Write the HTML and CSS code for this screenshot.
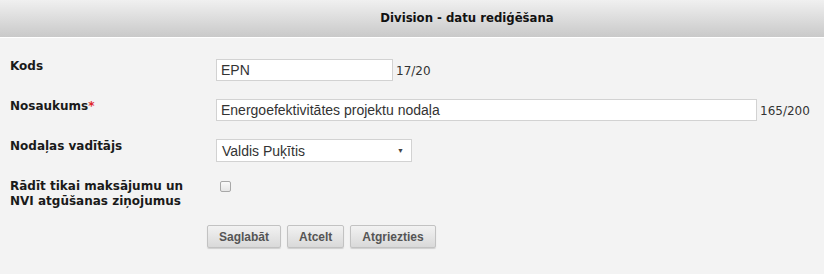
FILE: index.html
```html
<!DOCTYPE html>
<html lang="lv">
<head>
    <meta charset="UTF-8">
    <title>Division - datu rediģēšana</title>
    <link rel="stylesheet" href="styles.css">
</head>
<body>
    <div class="header">
        <h1>Division - datu rediģēšana</h1>
    </div>

    <form class="edit-form">
        <div class="form-row">
            <label class="form-label" for="kods">Kods</label>
            <div class="form-field">
                <input type="text" id="kods" class="text-input short" value="EPN">
                <span class="counter">17/20</span>
            </div>
        </div>
        <div class="form-row">
            <label class="form-label" for="nosaukums">Nosaukums<span class="required">*</span></label>
            <div class="form-field">
                <input type="text" id="nosaukums" class="text-input long" value="Energoefektivitātes projektu nodaļa">
                <span class="counter">165/200</span>
            </div>
        </div>
        <div class="form-row">
            <label class="form-label" for="vaditajs">Nodaļas vadītājs</label>
            <div class="form-field">
                <div class="select-box" id="vaditajs">
                    <span>Valdis Puķītis</span>
                    <span class="arrow">&#9660;</span>
                </div>
            </div>
        </div>
        <div class="form-row">
            <label class="form-label" for="tikai">Rādīt tikai maksājumu un NVI atgūšanas ziņojumus</label>
            <div class="form-field">
                <span class="checkbox" id="tikai"></span>
            </div>
        </div>
        <div class="buttons">
            <button type="button" class="btn">Saglabāt</button>
            <button type="button" class="btn">Atcelt</button>
            <button type="button" class="btn">Atgriezties</button>
        </div>
    </form>
</body>
</html>
```

FILE: styles.css
```css
* {
    margin: 0;
    padding: 0;
    box-sizing: border-box;
}

body {
    font-family: "DejaVu Sans", Verdana, sans-serif;
    background: #f3f3f3;
    color: #222;
    width: 824px;
    height: 274px;
    overflow: hidden;
}

.header {
    height: 38px;
    background: linear-gradient(to bottom, #f0f0f0 0%, #c9c9c9 100%);
    border-bottom: 1px solid #ffffff;
    padding-left: 110px;
    display: flex;
    align-items: center;
    justify-content: center;
}

.header h1 {
    font-family: "DejaVu Sans Condensed", "DejaVu Sans", sans-serif;
    font-stretch: condensed;
    font-size: 13px;
    font-weight: bold;
    color: #111;
    padding-bottom: 2px;
}

.edit-form {
    padding: 21px 0 0 10px;
}

.form-row {
    display: grid;
    grid-template-columns: 206px auto;
    min-height: 40px;
}

.form-label {
    font-size: 12px;
    font-weight: bold;
    line-height: 15px;
    color: #1a1a1a;
    width: 175px;
}

.required {
    color: #e0262b;
}

.form-field {
    display: flex;
    align-items: flex-end;
    align-self: start;
}

.text-input {
    font-family: "Liberation Sans", Arial, sans-serif;
    font-size: 14px;
    color: #333;
    height: 22px;
    padding: 0 4px;
    border: 1px solid #d2d2d2;
    background: #fff;
}

.text-input.short {
    width: 177px;
}

.text-input.long {
    width: 541px;
}

.counter {
    font-size: 12px;
    color: #333;
    padding: 0 0 3px 3px;
}

.select-box {
    font-family: "Liberation Sans", Arial, sans-serif;
    font-size: 14px;
    color: #333;
    width: 196px;
    height: 23px;
    padding: 0 7px 0 5px;
    border: 1px solid #d2d2d2;
    background: #fff;
    display: flex;
    align-items: center;
    justify-content: space-between;
}

.select-box .arrow {
    font-size: 7px;
    color: #444;
}

.checkbox {
    display: block;
    width: 11px;
    height: 11px;
    margin: 2px 0 0 4px;
    border: 1px solid #a8a8a8;
    border-radius: 2px;
    background: linear-gradient(to bottom, #fafafa, #e6e6e6);
}

.form-row:nth-child(4) {
    min-height: 46px;
}

.buttons {
    display: flex;
    gap: 6px;
    padding-left: 197px;
}

.btn {
    font-family: "Liberation Sans", Arial, sans-serif;
    font-size: 12px;
    font-weight: bold;
    color: #555;
    height: 23px;
    padding: 0 11px;
    border: 1px solid #c2c2c2;
    border-radius: 2px;
    background: linear-gradient(to bottom, #f2f2f2, #d9d9d9);
    box-shadow: 0 1px 1px rgba(0,0,0,0.15);
}
```
